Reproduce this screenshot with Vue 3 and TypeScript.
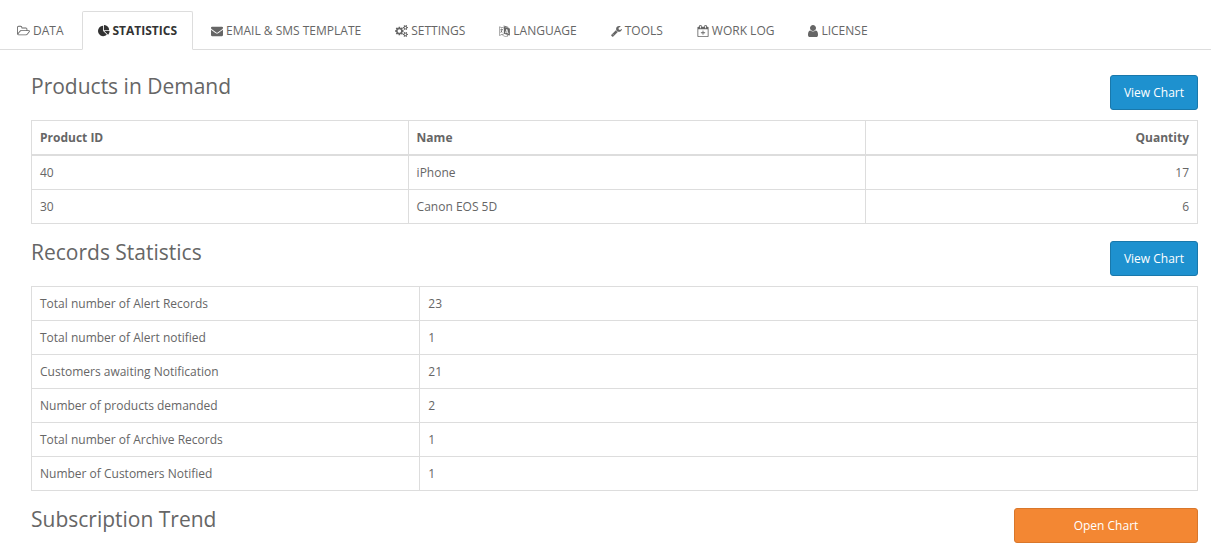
<script setup lang="ts">
import { ref } from 'vue'

interface Tab {
  label: string
  box: string
  width: number
  path: string
}

const cogTeeth =
  'v140q0 16-149 31-12 27-30 52 51 113 51 138 0 4-4 7-122 71-124 71-8 0-46-47t-52-68q-20 2-30 2t-30-2q-14 21-52 68t-46 47q-2 0-124-71-4-3-4-7 0-25 51-138-18-25-30-52-149-15-149-31v-140q0-16 149-31 13-29 30-52-51-113-51-138 0-4 4-7 4-2 35-20t59-34 30-16q8 0 46 46.5t52 67.5q20-2 30-2t30 2q51-71 92-112l6-2q4 0 124 70 4 3 4 7 0 25-51 138 17 23 30 52 149 15 149 31z'

const tabs: Tab[] = [
  {
    label: 'DATA',
    box: '-64 0 1920 1792',
    width: 13,
    path: 'M1717 931q0-35-53-35h-1088q-40 0-85.5 21.5t-71.5 52.5l-294 363q-18 24-18 40 0 35 53 35h1088q40 0 86-22t71-53l294-363q18-22 18-39zm-1141-163h768v-160q0-40-28-68t-68-28h-576q-40 0-68-28t-28-68v-64q0-40-28-68t-68-28h-320q-40 0-68 28t-28 68v853l256-315q44-53 116-87.5t140-34.5zm1269 163q0 62-46 120l-295 363q-43 53-116 87.5t-140 34.5h-1088q-92 0-158-66t-66-158v-960q0-92 66-158t158-66h320q92 0 158 66t66 158v32h544q92 0 158 66t66 158v160h192q54 0 99 24.5t67 70.5q15 32 15 68z',
  },
  {
    label: 'STATISTICS',
    box: '0 0 1792 1792',
    width: 12,
    path: 'M768 890l546 546q-106 108-247.5 168t-298.5 60q-209 0-385.5-103t-279.5-279.5-103-385.5 103-385.5 279.5-279.5 385.5-103v762zm187 6h773q0 157-60 298.5t-168 247.5zm709-128h-768v-768q209 0 385.5 103t279.5 279.5 103 385.5z',
  },
  {
    label: 'EMAIL & SMS TEMPLATE',
    box: '0 0 1792 1792',
    width: 12,
    path: 'M1792 710v794q0 66-47 113t-113 47h-1472q-66 0-113-47t-47-113v-794q44 49 101 87 362 246 497 345 57 42 92.5 65.5t94.5 48 110 24.5h2q51 0 110-24.5t94.5-48 92.5-65.5q170-123 498-345 57-39 100-87zm0-294q0 79-49 151t-122 123q-376 261-468 325-10 7-42.5 31t-54 38.5-52 32.5-57.5 27-50 9h-2q-23 0-50-9t-57.5-27-52-32.5-54-38.5-42.5-31q-91-64-262-182.5t-205-142.5q-62-42-117-115.5t-55-136.5q0-78 41.5-130t118.5-52h1472q65 0 112.5 47t47.5 113z',
  },
  {
    label: 'SETTINGS',
    box: '-64 0 1920 1792',
    width: 13,
    path:
      'M832 896q0-106-75-181t-181-75-181 75-75 181 75 181 181 75 181-75 75-181zm768 512q0-52-38-90t-90-38-90 38-38 90q0 53 37.5 90.5t90.5 37.5 90.5-37.5 37.5-90.5zm0-1024q0-52-38-90t-90-38-90 38-38 90q0 53 37.5 90.5t90.5 37.5 90.5-37.5 37.5-90.5zm-384 421v185q0 10-7 19.5t-16 10.5l-155 24q-11 35-32 76 34 48 90 115 7 11 7 20 0 12-7 19-23 30-82.5 89.5t-78.5 59.5q-11 0-21-7l-115-90q-37 19-77 31-11 108-23 155-7 24-30 24h-186q-11 0-20-7.5t-10-17.5l-23-153q-34-10-75-31l-118 89q-7 7-20 7-11 0-21-8-144-133-144-160 0-9 7-19 10-14 41-53t47-61q-23-44-35-82l-152-24q-10-1-17-9.5t-7-19.5v-185q0-10 7-19.5t16-10.5l155-24q11-35 32-76-34-48-90-115-7-11-7-20 0-12 7-20 22-30 82-89t79-59q11 0 21 7l115 90q34-18 77-32 11-108 23-154 7-24 30-24h186q11 0 20 7.5t10 17.5l23 153q34 10 75 31l118-89q8-7 20-7 11 0 21 8 144 133 144 160 0 8-7 19-12 16-42 54t-45 60q23 48 34 82l152 23q10 2 17 10.5t7 19.5z' +
      'M1856 1338' + cogTeeth + 'M1856 314' + cogTeeth,
  },
  {
    label: 'LANGUAGE',
    box: '60 0 1680 1792',
    width: 11,
    path: 'M100 200L800 400V480L180 310V1520L800 1290V1390L100 1640ZM280 600H430V520H520V600H650V690H580Q550 850 480 960L590 1080 530 1150 420 1040 300 1170 240 1100 370 960 300 830 380 790 430 870Q470 790 490 690H280ZM700 100H900L1500 290V400L800 190ZM800 260L1720 530V1600L800 1330ZM1190 600L1000 1210 1120 1245 1160 1110 1360 1168 1405 1328 1530 1364 1320 638ZM1250 780L1325 1050 1190 1010ZM600 1560Q950 1750 1300 1620L1270 1540 1500 1590 1370 1770 1340 1690Q950 1820 600 1640Z',
  },
  {
    label: 'TOOLS',
    box: '64 0 1664 1792',
    width: 11,
    path: 'M448 1472q0-26-19-45t-45-19-45 19-19 45 19 45 45 19 45-19 19-45zm644-420l-682 682q-37 37-90 37-52 0-91-37l-106-108q-38-36-38-90 0-53 38-91l681-681q39 98 114.5 173.5t173.5 114.5zm634-435q0 39-23 106-47 134-164.5 217.5t-258.5 83.5q-185 0-316.5-131.5t-131.5-316.5 131.5-316.5 316.5-131.5q58 0 121.5 16.5t107.5 46.5q16 11 16 28t-16 28l-293 169v224l193 107q5-3 79-48.5t135.5-81 70.5-35.5q15 0 23.5 10t8.5 25z',
  },
  {
    label: 'WORK LOG',
    box: '64 0 1792 1792',
    width: 12,
    path: 'M1664 256q52 0 90 38t38 90v1280q0 52-38 90t-90 38h-1408q-52 0-90-38t-38-90v-1280q0-52 38-90t90-38h128v-96q0-66 47-113t113-47h64q66 0 113 47t47 113v96h384v-96q0-66 47-113t113-47h64q66 0 113 47t47 113v96h128zm-384-96v288q0 14 9 23t23 9h64q14 0 23-9t9-23v-288q0-14-9-23t-23-9h-64q-14 0-23 9t-9 23zm-768 0v288q0 14 9 23t23 9h64q14 0 23-9t9-23v-288q0-14-9-23t-23-9h-64q-14 0-23 9t-9 23zm1152 1504v-1024h-1408v1024h1408zm-640-576h224q14 0 23 9t9 23v64q0 14-9 23t-23 9h-224v224q0 14-9 23t-23 9h-64q-14 0-23-9t-9-23v-224h-224q-14 0-23-9t-9-23v-64q0-14 9-23t23-9h224v-224q0-14 9-23t23-9h64q14 0 23 9t9 23v224z',
  },
  {
    label: 'LICENSE',
    box: '256 128 1280 1536',
    width: 10,
    path: 'M1536 1399q0 109-62.5 187t-150.5 78h-854q-88 0-150.5-78t-62.5-187q0-85 8.5-160.5t31.5-152 58.5-131 94-89 134.5-34.5q131 128 313 128t313-128q76 0 134.5 34.5t94 89 58.5 131 31.5 152 8.5 160.5zm-256-887q0 159-112.5 271.5t-271.5 112.5-271.5-112.5-112.5-271.5 112.5-271.5 271.5-112.5 271.5 112.5 112.5 271.5z',
  },
]

const active = ref('STATISTICS')

const products = [
  { id: 40, name: 'iPhone', quantity: 17 },
  { id: 30, name: 'Canon EOS 5D', quantity: 6 },
]

const records = [
  { label: 'Total number of Alert Records', value: 23 },
  { label: 'Total number of Alert notified', value: 1 },
  { label: 'Customers awaiting Notification', value: 21 },
  { label: 'Number of products demanded', value: 2 },
  { label: 'Total number of Archive Records', value: 1 },
  { label: 'Number of Customers Notified', value: 1 },
]
</script>

<template>
  <div class="page">
    <nav class="tabs">
      <a
        v-for="tab in tabs"
        :key="tab.label"
        href="#"
        class="tab"
        :class="{ active: tab.label === active }"
        @click.prevent="active = tab.label"
      >
        <svg :viewBox="tab.box" :width="tab.width" height="12" aria-hidden="true">
          <path :d="tab.path" fill-rule="evenodd" />
        </svg>
        <span>{{ tab.label }}</span>
      </a>
    </nav>

    <main class="content">
      <section>
        <header class="head">
          <h3>Products in Demand</h3>
          <button type="button" class="btn primary">View Chart</button>
        </header>
        <table class="products">
          <thead>
            <tr>
              <th scope="col" class="id">Product ID</th>
              <th scope="col" class="name">Name</th>
              <th scope="col" class="num">Quantity</th>
            </tr>
          </thead>
          <tbody>
            <tr v-for="p in products" :key="p.id">
              <td>{{ p.id }}</td>
              <td>{{ p.name }}</td>
              <td class="num">{{ p.quantity }}</td>
            </tr>
          </tbody>
        </table>
      </section>

      <section>
        <header class="head">
          <h3>Records Statistics</h3>
          <button type="button" class="btn primary">View Chart</button>
        </header>
        <table class="records">
          <tbody>
            <tr v-for="r in records" :key="r.label">
              <th scope="row">{{ r.label }}</th>
              <td>{{ r.value }}</td>
            </tr>
          </tbody>
        </table>
      </section>

      <section>
        <header class="head">
          <h3>Subscription Trend</h3>
          <button type="button" class="btn warning">Open Chart</button>
        </header>
      </section>
    </main>
  </div>
</template>

<style>
body {
  margin: 0;
  background: #fff;
}
</style>

<style scoped>
.page {
  font-family: 'Open Sans', 'Noto Sans', sans-serif;
  font-size: 12px;
  line-height: 17px;
  color: #666;
}

.tabs {
  display: flex;
  gap: 2px;
  padding: 11px 1px 0;
  border-bottom: 1px solid #ddd;
}

.tab {
  display: flex;
  align-items: center;
  gap: 3px;
  padding: 10px 15px;
  margin-bottom: -1px;
  border: 1px solid transparent;
  border-radius: 2px 2px 0 0;
  color: #666;
  text-decoration: none;
  white-space: nowrap;
}

.tab.active {
  border-color: #ddd;
  border-bottom-color: #fff;
  background: #fff;
  color: #333;
  font-weight: 700;
}

.tab svg {
  flex: none;
  fill: currentColor;
}

.content {
  display: flex;
  flex-direction: column;
  gap: 17px;
  padding: 25px 13px 0 31px;
}

.head {
  display: flex;
  justify-content: space-between;
  align-items: flex-start;
  padding-bottom: 10px;
}

h3 {
  margin: 0;
  font-size: 21px;
  font-weight: 400;
  line-height: 22px;
  color: #666;
}

.btn {
  padding: 8px 13px;
  border: 1px solid;
  border-radius: 3px;
  font: inherit;
  color: #fff;
  cursor: pointer;
}

.primary {
  background: #1e91cf;
  border-color: #1978ab;
}

.warning {
  width: 184px;
  background: #f38733;
  border-color: #d9772b;
}

table {
  width: 100%;
  border-collapse: collapse;
  table-layout: fixed;
}

th,
td {
  box-sizing: border-box;
  padding: 8px;
  border: 1px solid #ddd;
  text-align: left;
  font-weight: 400;
}

thead th {
  border-bottom-width: 2px;
  font-weight: 700;
}

.id {
  width: 32.3%;
}

.name {
  width: 39.2%;
}

.num {
  text-align: right;
}

.records th {
  width: 33.3%;
}
</style>
